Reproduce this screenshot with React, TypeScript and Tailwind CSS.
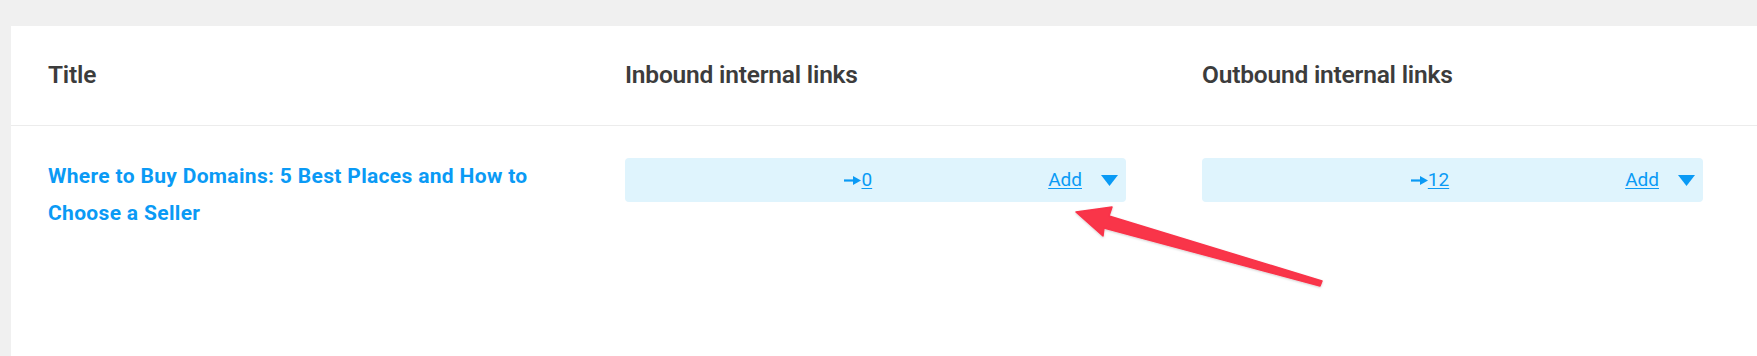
const font = { fontFamily: "Roboto, 'Liberation Sans', sans-serif" };

function LinkBox({ count }: { count: number }) {
  return (
    <div className="flex h-[44px] w-[501px] items-center justify-end rounded-[4px] bg-[#dff4fd] pr-[8px] text-[19px] text-[#0a9af5]">
      <span className="mr-[176px] flex items-center">
        <svg width="17" height="9" viewBox="0 0 17 9" className="mt-[1px]">
          <path d="M0 3.4H10V5.6H0Z" fill="#0a9af5" />
          <path d="M9 0L17 4.5L9 9Z" fill="#0a9af5" />
        </svg>
        <a href="#" className="underline underline-offset-2">{count}</a>
      </span>
      <a href="#" className="underline underline-offset-2">Add</a>
      <svg width="17" height="11" viewBox="0 0 17 11" className="ml-[19px]">
        <path d="M0 0H17L8.5 11Z" fill="#0a9af5" />
      </svg>
    </div>
  );
}

export default function App() {
  return (
    <div className="relative h-[356px] overflow-hidden bg-[#f0f0f0] pl-[11px] pt-[26px]" style={font}>
      <div className="h-[330px] bg-white">
        <div className="grid h-[100px] grid-cols-[577px_577px_577px] items-center border-b border-[#ececec] pl-[37px] text-[24.5px] font-semibold text-[#3c3c3c]">
          <div className="tracking-[-0.2px]">Title</div>
          <div className="tracking-[-0.2px]">Inbound internal links</div>
          <div className="tracking-[-0.2px]">Outbound internal links</div>
        </div>
        <div className="grid grid-cols-[577px_577px_577px] pl-[37px] pt-[32px]">
          <a href="#" className="w-[501px] text-[21px] font-bold leading-[37px] tracking-[0.33px] text-[#0a9af5]">
            Where to Buy Domains: 5 Best Places and How to Choose a Seller
          </a>
          <LinkBox count={0} />
          <LinkBox count={12} />
        </div>
      </div>
      <svg className="pointer-events-none absolute left-0 top-0" width="1757" height="356">
        <defs>
          <filter id="sh" x="-10%" y="-10%" width="120%" height="130%">
            <feDropShadow dx="0" dy="1" stdDeviation="1.2" floodColor="#000" floodOpacity="0.18" />
          </filter>
        </defs>
        <polygon
          points="1076,212 1112,207 1109,216 1322,281 1320,286 1104,228 1103,236"
          fill="#f9344a"
          strokeLinejoin="round"
          stroke="#f9344a"
          strokeWidth="1.5"
          filter="url(#sh)"
        />
      </svg>
    </div>
  );
}
